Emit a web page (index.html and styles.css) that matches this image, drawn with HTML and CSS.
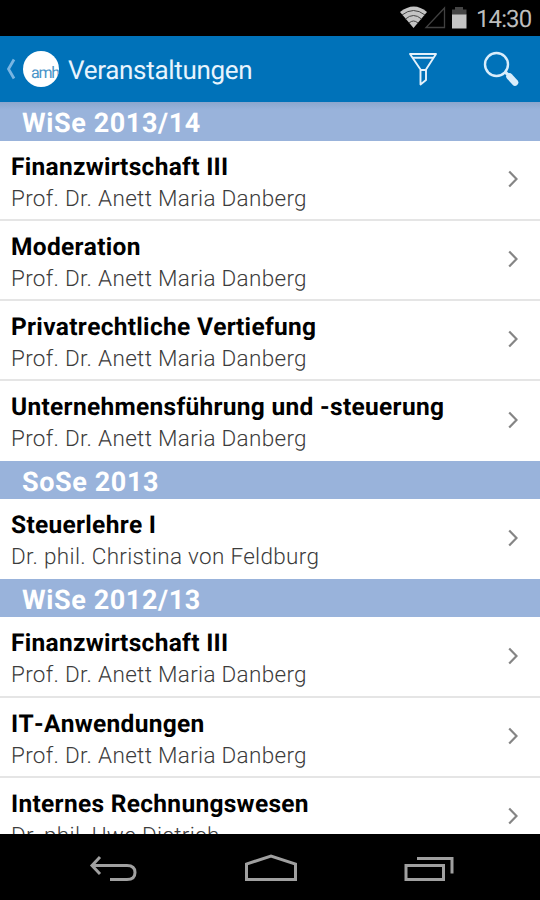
FILE: index.html
```html
<!DOCTYPE html>
<html lang="de">
<head>
<meta charset="utf-8">
<title>Veranstaltungen</title>
<link rel="stylesheet" href="styles.css">
</head>
<body>
<div class="screen">
  <div class="status">
    <svg class="status-icons" width="70" height="36" viewBox="0 0 70 36">
      <path d="M1 12Q15 1 28 12L14.500 28Z" fill="#c4c4c4"/>
      <path d="M3 15Q14.500 6 26 15M6.500 19Q14.500 12 22.500 19M10 23Q14.500 19 19 23" fill="none" stroke="#444" stroke-width="1"/>
      <path d="M45.500 8V27.500H27Z" fill="none" stroke="#414141" stroke-width="1.300"/>
      <path d="M56 7h8v2.500h3.500V15H53V9.500h3Z" fill="#454545"/>
      <path d="M53 14.500h14.500V28.500H53Z" fill="#c4c4c4"/>
    </svg>
    <span class="clock">14:30</span>
  </div>
  <header class="bar">
    <svg class="back" width="10" height="22" viewBox="0 0 10 22"><path d="M8 1.500L2.500 11L8 20.500" fill="none" stroke="#78b5e2" stroke-width="2.800"/></svg>
    <div class="logo"><span>amh</span></div>
    <h1>Veranstaltungen</h1>
    <svg class="filter" width="30" height="36" viewBox="0 0 30 36"><g fill="none" stroke="#e4f1fb" stroke-width="1.900" stroke-linejoin="round"><path d="M2 2H28L18 17.500V28L12.500 32.500V17.500Z"/><path d="M5 5.800H25M13 18H18"/></g></svg>
    <svg class="search" width="36" height="36" viewBox="0 0 36 36"><circle cx="13.500" cy="13.500" r="11.500" fill="none" stroke="#d9edfb" stroke-width="2.400"/><path d="M22 21L26 24.500" stroke="#d9edfb" stroke-width="3"/><path d="M26.500 25.500L32 31.500" stroke="#d9edfb" stroke-width="6.500" stroke-linecap="round"/></svg>
  </header>
  <main class="list">
    <h2 class="first">WiSe 2013/14</h2>
    <div class="row"><div><h3>Finanzwirtschaft III</h3><p>Prof. Dr. Anett Maria Danberg</p></div><svg class="chevron" viewBox="0 0 10 18"><path d="M1.200 1.500L8.500 9L1.200 16.500"/></svg></div>
    <div class="row"><div><h3>Moderation</h3><p>Prof. Dr. Anett Maria Danberg</p></div><svg class="chevron" viewBox="0 0 10 18"><path d="M1.200 1.500L8.500 9L1.200 16.500"/></svg></div>
    <div class="row"><div><h3>Privatrechtliche Vertiefung</h3><p>Prof. Dr. Anett Maria Danberg</p></div><svg class="chevron" viewBox="0 0 10 18"><path d="M1.200 1.500L8.500 9L1.200 16.500"/></svg></div>
    <div class="row"><div><h3>Unternehmensführung und -steuerung</h3><p>Prof. Dr. Anett Maria Danberg</p></div><svg class="chevron" viewBox="0 0 10 18"><path d="M1.200 1.500L8.500 9L1.200 16.500"/></svg></div>
    <h2>SoSe 2013</h2>
    <div class="row"><div><h3>Steuerlehre I</h3><p>Dr. phil. Christina von Feldburg</p></div><svg class="chevron" viewBox="0 0 10 18"><path d="M1.200 1.500L8.500 9L1.200 16.500"/></svg></div>
    <h2>WiSe 2012/13</h2>
    <div class="row"><div><h3>Finanzwirtschaft III</h3><p>Prof. Dr. Anett Maria Danberg</p></div><svg class="chevron" viewBox="0 0 10 18"><path d="M1.200 1.500L8.500 9L1.200 16.500"/></svg></div>
    <div class="row"><div><h3>IT-Anwendungen</h3><p>Prof. Dr. Anett Maria Danberg</p></div><svg class="chevron" viewBox="0 0 10 18"><path d="M1.200 1.500L8.500 9L1.200 16.500"/></svg></div>
    <div class="row"><div><h3>Internes Rechnungswesen</h3><p>Dr. phil. Uwe Dietrich</p></div><svg class="chevron" viewBox="0 0 10 18"><path d="M1.200 1.500L8.500 9L1.200 16.500"/></svg></div>
  </main>
  <nav class="nav">
    <svg width="48" height="30" viewBox="0 0 48 30"><path d="M11 3L3 11.500L11 20M3 11.500H38Q46 11.500 46 18.500T38 25.500H21"/></svg>
    <svg width="52" height="30" viewBox="0 0 52 30"><path d="M1.500 25.500V10L26 2L50.500 10V25.500Z"/></svg>
    <svg width="50" height="30" viewBox="0 0 50 30"><path d="M2 11.500H39.500V25.500H2ZM13 4.500H48V19.500"/></svg>
  </nav>
</div>
</body>
</html>
```
FILE: styles.css
```css
* { box-sizing: border-box; margin: 0; padding: 0; }
body { font-family: Roboto, "Liberation Sans", sans-serif; background: #000; text-rendering: geometricPrecision; }
svg { display: block; flex: none; }
.screen { width: 540px; height: 900px; display: flex; flex-direction: column; overflow: hidden; background: #000; }
.status { height: 36px; flex: none; display: flex; align-items: center; justify-content: flex-end; padding-right: 8px; }
.status-icons { margin-right: 7px; }
.clock { font-size: 24px; line-height: 36px; color: #bdbdbd; width: 56px; white-space: nowrap; padding-top: 2px; letter-spacing: -0.9px; }
.bar { height: 66px; flex: none; display: flex; align-items: center; background: #0072b9; padding-left: 6px; }
.logo { width: 36px; height: 36px; margin-left: 7px; border-radius: 50%; background: #fff; overflow: hidden; }
.logo span { display: block; padding-left: 8px; font-size: 16px; line-height: 43px; letter-spacing: -1.2px; color: #4a94c8; }
.bar h1 { margin-left: 9px; width: 200px; font-size: 26px; line-height: 66px; font-weight: 400; letter-spacing: -0.3px; color: #e8f4fd; padding-top: 3px; white-space: nowrap; }
.filter { margin-left: 140px; margin-top: 2px; }
.search { margin-left: 45px; }
.list { height: 732px; flex: none; overflow: hidden; background: #fff; }
.list h2 { height: 38px; padding-left: 22px; background: #99b3db; color: #fff; font-size: 27px; line-height: 42px; font-weight: 700; letter-spacing: 0.6px; }
.list h2.first { height: 38.500px; line-height: 43px; background: linear-gradient(#8ba6cd, #99b3db 8px); }
.row { height: 80.200px; display: flex; justify-content: space-between; padding: 11px 22px 0 11px; border-bottom: 2px solid #e5e5e5; }
.row:has(+ h2) { border-bottom-color: #fff; }
.row h3 { font-size: 24.500px; line-height: 30px; font-weight: 700; letter-spacing: 0.300px; font-kerning: none; color: #000; white-space: nowrap; }
.row p { font-size: 22.500px; line-height: 30px; margin-top: 2px; font-weight: 300; letter-spacing: 0.310px; color: #3c3c3c; white-space: nowrap; }
.chevron { width: 10px; height: 18px; margin-top: 18.500px; fill: none; stroke: #858585; stroke-width: 2.200; }
.nav { height: 66px; flex: none; display: flex; align-items: center; justify-content: space-between; padding: 4px 86px 0 89px; }
.nav svg { fill: none; stroke: #a0a0a0; stroke-width: 3; }
```
